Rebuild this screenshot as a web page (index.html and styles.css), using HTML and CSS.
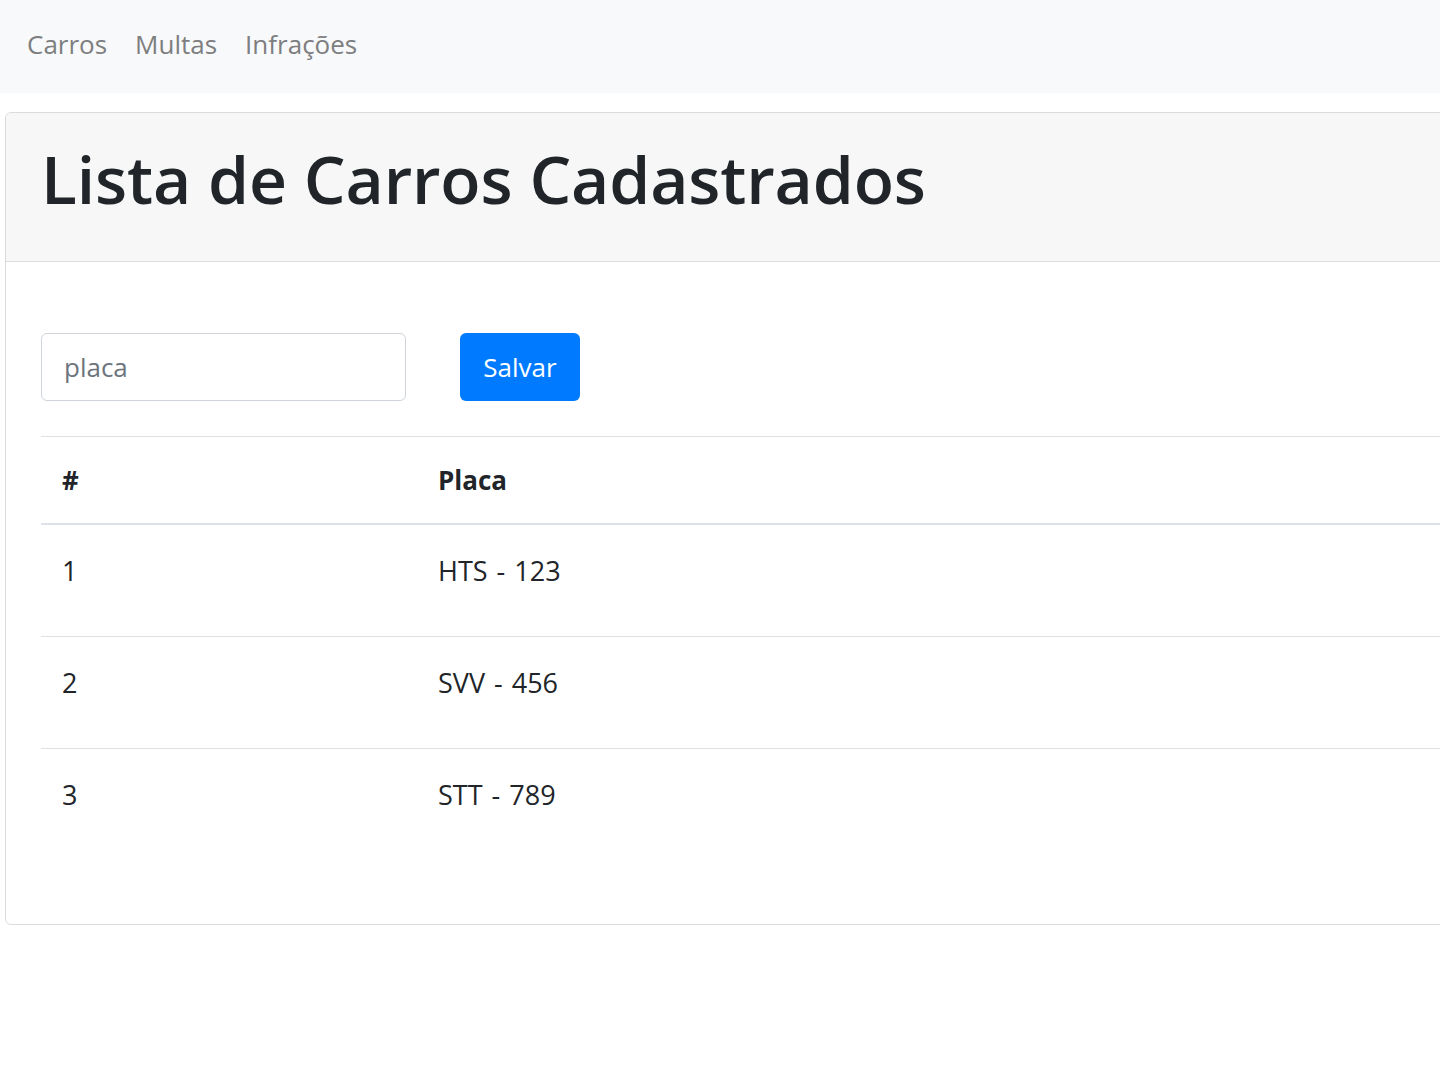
FILE: index.html
```html
<!DOCTYPE html>
<html lang="pt">
<head>
<meta charset="utf-8">
<title>Lista de Carros</title>
<link rel="stylesheet" href="styles.css">
</head>
<body>
<nav class="navbar">
  <a class="nav-link" href="#">Carros</a>
  <a class="nav-link" href="#">Multas</a>
  <a class="nav-link" href="#">Infrações</a>
</nav>
<div class="page">
  <div class="card">
    <div class="card-header">
      <h1 class="title">Lista de Carros Cadastrados</h1>
    </div>
    <div class="card-body">
      <form class="form-row">
        <input class="input" type="text" placeholder="placa">
        <button class="btn" type="button">Salvar</button>
      </form>
      <table class="table">
        <thead>
          <tr><th class="col-id">#</th><th>Placa</th></tr>
        </thead>
        <tbody>
          <tr><td class="col-id">1</td><td>HTS - 123</td></tr>
          <tr><td class="col-id">2</td><td>SVV - 456</td></tr>
          <tr class="last"><td class="col-id">3</td><td>STT - 789</td></tr>
        </tbody>
      </table>
    </div>
  </div>
</div>
</body>
</html>
```
FILE: styles.css
```css
html, body {
  margin: 0;
  padding: 0;
  background: #fff;
  overflow-x: hidden;
}
body {
  font-family: "Open Sans", "Noto Sans", sans-serif;
  color: #212529;
}
.navbar {
  height: 93px;
  background: #f8f9fa;
  display: flex;
  align-items: center;
  gap: 28px;
  padding-left: 27px;
  padding-bottom: 6px;
  box-sizing: border-box;
}
.nav-link {
  font-size: 26px;
  color: #7d7e7f;
  text-decoration: none;
}
.page {
  overflow: hidden;
  padding: 19px 0 0 5px;
}
.card {
  width: 1500px;
  border: 1px solid #dcdcdc;
  border-radius: 6px;
  background: #fff;
}
.card-header {
  height: 149px;
  background: #f7f7f7;
  border-bottom: 1px solid #dcdcdc;
  border-radius: 6px 6px 0 0;
  display: flex;
  align-items: center;
  padding-left: 35px;
  padding-bottom: 18px;
  box-sizing: border-box;
}
.title {
  margin: 0;
  font-size: 66px;
  font-weight: 600;
  letter-spacing: -0.15px;
  line-height: 1;
  color: #212529;
}
.card-body {
  padding: 71px 0 64px 35px;
}
.form-row {
  display: flex;
  gap: 54px;
  margin: 0 0 35px 0;
}
.input {
  width: 365px;
  height: 68px;
  box-sizing: border-box;
  border: 1px solid #ced4da;
  border-radius: 6px;
  padding: 0 22px;
  font-family: inherit;
  font-size: 26px;
  color: #495057;
}
.input::placeholder {
  color: #6c757d;
}
.btn {
  width: 120px;
  height: 68px;
  border: none;
  border-radius: 6px;
  background: #007bff;
  color: #fff;
  font-family: inherit;
  font-size: 26px;
  padding: 0;
}
.table {
  width: 100%;
  border-collapse: collapse;
}
.table th, .table td {
  text-align: left;
  padding: 0 0 0 21px;
}
.table th {
  font-size: 26px;
  font-weight: 700;
  height: 86px;
  border-top: 1px solid #dee2e6;
  border-bottom: 2px solid #dee2e6;
}
.table td {
  font-size: 27px;
  line-height: 39px;
  height: 112px;
  box-sizing: border-box;
  padding-top: 26px;
  vertical-align: top;
  border-bottom: 1px solid #dee2e6;
  word-spacing: 2px;
}
.table tr.last td {
  border-bottom: none;
}
.col-id {
  width: 355px;
}
```
